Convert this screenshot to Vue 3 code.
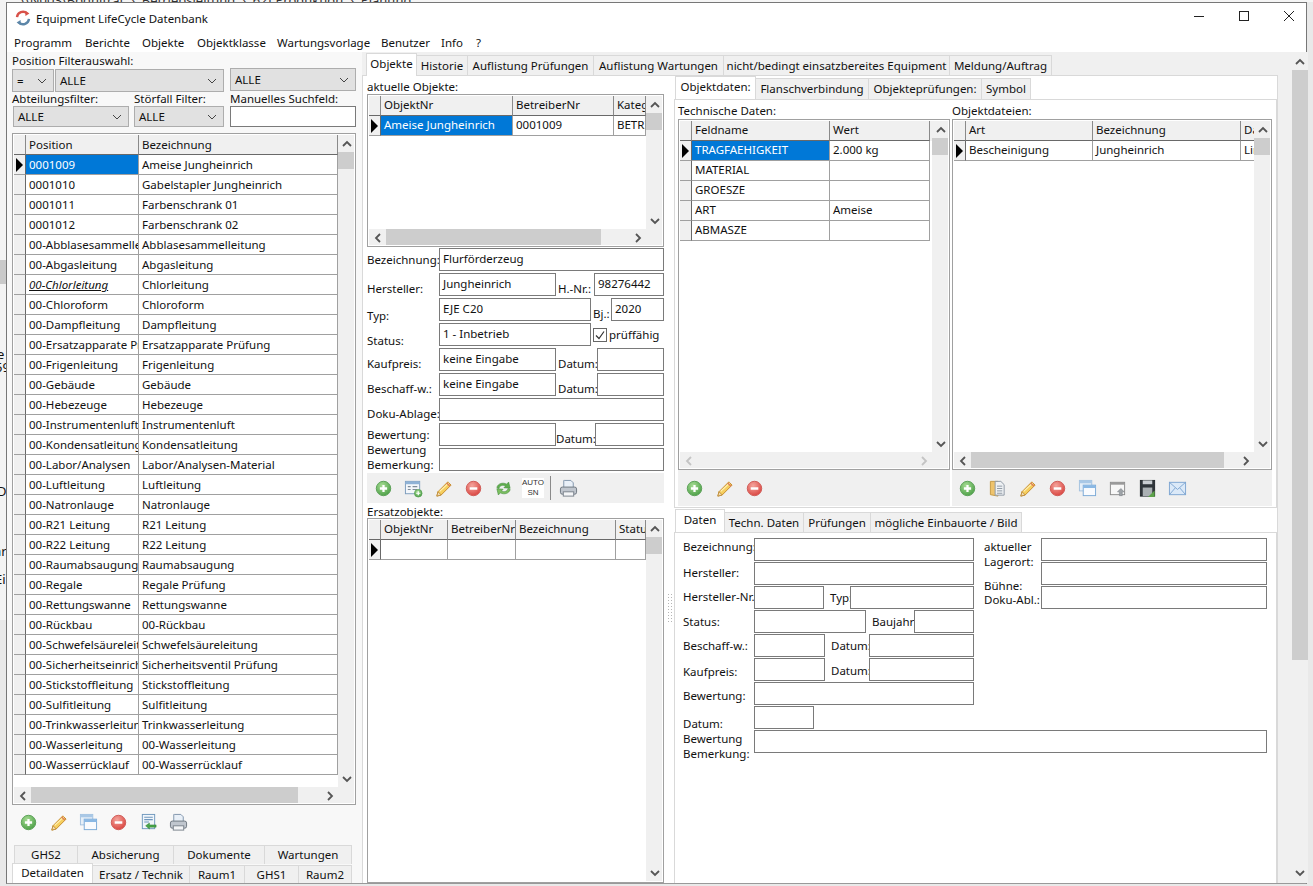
<script setup>
import { h } from 'vue'

const chev = (d, pale) =>
  h('svg', { class: 'chev' + (pale ? ' pale' : ''), viewBox: '0 0 10 10', width: 10, height: 10 }, [
    h('path', { d: { u: 'M1 7 L5 3 L9 7', d: 'M1 3 L5 7 L9 3', l: 'M7 1 L3 5 L7 9', r: 'M3 1 L7 5 L3 9' }[d] }),
  ])

const DataGrid = (p) =>
  h('div', { class: 'dg' }, [
    h('div', { class: 'dg-main' }, [
      h('div', { class: 'dg-row dg-head' }, [
        h('span', { class: 'dg-rh' }),
        ...p.cols.map((c) => h('span', { class: 'dg-c', style: { width: c.w + 'px' } }, c.t)),
      ]),
      ...p.rows.map((r, i) =>
        h('div', { class: 'dg-row' }, [
          h('span', { class: 'dg-rh' }, i === 0 ? [h('i', { class: 'tri' })] : []),
          ...p.cols.map((c, j) =>
            h(
              'span',
              {
                class: ['dg-c', i === 0 && j === 0 && p.sel ? 'sel' : '', r.em && j === 0 ? 'em' : ''],
                style: { width: c.w + 'px' },
              },
              r.c[j] || '',
            ),
          ),
        ]),
      ),
    ]),
    h('div', { class: 'dg-v' }, [
      h('span', { class: 'sb-btn' }, [chev('u')]),
      h('span', { class: 'v-thumb' }),
      h('span', { class: 'sb-gap' }),
      h('span', { class: 'sb-btn' }, [chev('d')]),
    ]),
    p.noH
      ? null
      : h('div', { class: 'dg-h' }, [
          h('span', { class: 'sb-btn' }, [chev('l', !p.hw)]),
          p.hw ? h('span', { class: 'h-thumb', style: { width: p.hw + 'px' } }) : null,
          h('span', { class: 'sb-gap' }),
          h('span', { class: 'sb-btn' }, [chev('r', !p.hw)]),
        ]),
    p.noH ? null : h('div', { class: 'dg-corner' }),
  ])
DataGrid.props = ['cols', 'rows', 'sel', 'hw', 'noH']

const menu = [
  ['Programm', 71], ['Berichte', 57], ['Objekte', 55], ['Objektklasse', 80],
  ['Wartungsvorlage', 104], ['Benutzer', 60], ['Info', 35], ['?', 20],
]

const pair = (a, b) => ({ c: [a, b ?? a] })
const posRows = [
  pair('0001009', 'Ameise Jungheinrich'), pair('0001010', 'Gabelstapler Jungheinrich'),
  pair('0001011', 'Farbenschrank 01'), pair('0001012', 'Farbenschrank 02'),
  pair('00-Abblasesammelleitung', 'Abblasesammelleitung'), pair('00-Abgasleitung', 'Abgasleitung'),
  { c: ['00-Chlorleitung', 'Chlorleitung'], em: true }, pair('00-Chloroform', 'Chloroform'),
  pair('00-Dampfleitung', 'Dampfleitung'), pair('00-Ersatzapparate Prüfung', 'Ersatzapparate Prüfung'),
  pair('00-Frigenleitung', 'Frigenleitung'), pair('00-Gebäude', 'Gebäude'),
  pair('00-Hebezeuge', 'Hebezeuge'), pair('00-Instrumentenluft', 'Instrumentenluft'),
  pair('00-Kondensatleitung', 'Kondensatleitung'), pair('00-Labor/Analysen', 'Labor/Analysen-Material'),
  pair('00-Luftleitung', 'Luftleitung'), pair('00-Natronlauge', 'Natronlauge'),
  pair('00-R21 Leitung', 'R21 Leitung'), pair('00-R22 Leitung', 'R22 Leitung'),
  pair('00-Raumabsaugung', 'Raumabsaugung'), pair('00-Regale', 'Regale  Prüfung'),
  pair('00-Rettungswanne', 'Rettungswanne'), pair('00-Rückbau'),
  pair('00-Schwefelsäureleitung', 'Schwefelsäureleitung'), pair('00-Sicherheitseinrichtung', 'Sicherheitsventil Prüfung'),
  pair('00-Stickstoffleitung', 'Stickstoffleitung'), pair('00-Sulfitleitung', 'Sulfitleitung'),
  pair('00-Trinkwasserleitung', 'Trinkwasserleitung'), pair('00-Wasserleitung'), pair('00-Wasserrücklauf'),
]
const posCols = [{ t: 'Position', w: 113 }, { t: 'Bezeichnung', w: 199 }]
const objCols = [{ t: 'ObjektNr', w: 132 }, { t: 'BetreiberNr', w: 101 }, { t: 'Kategorie', w: 32 }]
const objRows = [{ c: ['Ameise Jungheinrich', '0001009', 'BETRIEB'] }]
const ersCols = [{ t: 'ObjektNr', w: 67 }, { t: 'BetreiberNr', w: 68 }, { t: 'Bezeichnung', w: 100 }, { t: 'Status', w: 30 }]
const ersRows = [{ c: ['', '', '', ''] }]
const techCols = [{ t: 'Feldname', w: 138 }, { t: 'Wert', w: 100 }]
const techRows = [
  { c: ['TRAGFAEHIGKEIT', '2.000 kg'] }, { c: ['MATERIAL', ''] }, { c: ['GROESZE', ''] },
  { c: ['ART', 'Ameise'] }, { c: ['ABMASZE', ''] },
]
const fileCols = [{ t: 'Art', w: 127 }, { t: 'Bezeichnung', w: 148 }, { t: 'Datei', w: 14 }]
const fileRows = [{ c: ['Bescheinigung', 'Jungheinrich', 'Link'] }]

const mainTabs = [
  ['Objekte', 51], ['Historie', 51], ['Auflistung Prüfungen', 126], ['Auflistung Wartungen', 130],
  ['nicht/bedingt einsatzbereites Equipment', 226], ['Meldung/Auftrag', 102],
]
const subTabs = [['Objektdaten:', 81], ['Flanschverbindung', 113], ['Objekteprüfungen:', 113], ['Symbol', 49]]
const dataTabs = [['Daten', 50], ['Techn. Daten', 79], ['Prüfungen', 67], ['mögliche Einbauorte / Bild', 151]]
const leftTabs1 = [['GHS2', 64], ['Absicherung', 96], ['Dokumente', 91], ['Wartungen', 87]]
const leftTabs2 = [['Detaildaten', 81], ['Ersatz / Technik', 97], ['Raum1', 55], ['GHS1', 54], ['Raum2', 53]]

const leftTools = ['add', 'edit', 'win', 'del', 'imp', 'print']
const techTools = ['add', 'edit', 'del']
const fileTools = ['add', 'folder', 'edit', 'del', 'win', 'upl', 'save', 'mail']
</script>

<template>
  <div class="page">
    <svg class="defs" width="0" height="0" aria-hidden="true">
      <defs>
        <radialGradient id="gG" cx="40%" cy="30%" r="75%"><stop offset="0" stop-color="#a6dc93" /><stop offset="1" stop-color="#4a9e45" /></radialGradient>
        <radialGradient id="gR" cx="40%" cy="30%" r="75%"><stop offset="0" stop-color="#f4a49c" /><stop offset="1" stop-color="#d9423d" /></radialGradient>
      </defs>
      <symbol id="i-add" viewBox="0 0 20 20"><circle cx="10" cy="10" r="7.6" fill="url(#gG)" stroke="#5a9f55" /><path d="M10 6.2v7.6M6.2 10h7.6" stroke="#fff" stroke-width="2.4" /></symbol>
      <symbol id="i-del" viewBox="0 0 20 20"><circle cx="10" cy="10" r="7.6" fill="url(#gR)" stroke="#cf5a55" /><path d="M6 10h8" stroke="#fff" stroke-width="2.6" /></symbol>
      <symbol id="i-edit" viewBox="0 0 20 20"><path d="M3 18l1.2-4.6L14.6 3 18 6.4 7.6 16.8z" fill="#f6cf5f" stroke="#c58a2a" stroke-width="1" /><path d="M3 18l1.2-4.6 3.4 3.4z" fill="#f3dcb4" stroke="#b8862e" stroke-width=".8" /><path d="M6 13L15.6 4" stroke="#fff2b8" stroke-width="1.2" /><path d="M13.4 4.2l3.4 3.4" stroke="#dd7f5a" stroke-width="1.6" /></symbol>
      <symbol id="i-win" viewBox="0 0 20 20"><rect x="1.5" y="1.5" width="13" height="11" fill="#e6eff8" stroke="#a3c1df" /><rect x="1.5" y="1.5" width="13" height="3" fill="#a9c8e6" /><rect x="5.5" y="6.5" width="13" height="11" fill="#f9fbfe" stroke="#7aa9d6" /><rect x="5.5" y="6.5" width="13" height="3" fill="#8ab8e4" /></symbol>
      <symbol id="i-imp" viewBox="0 0 20 20"><rect x="3.5" y="1.5" width="13" height="15" fill="#f1f6fb" stroke="#6f97bd" /><path d="M5.5 4.5h9M5.5 7h9M5.5 9.5h5" stroke="#6f97bd" stroke-width="1.2" /><path d="M7 13.5l4-3v2h7v2.400h-7v2z" fill="#48a64a" stroke="#2f7d34" stroke-width=".5" /></symbol>
      <symbol id="i-print" viewBox="0 0 20 20"><path d="M6 1.5h6.5L15 4v6H5V1.5z" fill="#e9f0f8" stroke="#7e93ab" /><rect x="1.5" y="8.5" width="17" height="7.5" rx="2" fill="#c0c6ce" stroke="#6e7680" /><rect x="4.5" y="13.5" width="11" height="4.5" fill="#f4f5f7" stroke="#7a828b" /></symbol>
      <symbol id="i-form" viewBox="0 0 20 20"><rect x="1.5" y="2.5" width="15" height="13" fill="#f4f7fb" stroke="#7c9cbc" /><rect x="1.5" y="2.5" width="15" height="3" fill="#8fb2d6" /><path d="M4 8h3M9 8h5M4 11h3M9 11h5" stroke="#7f8c99" stroke-width="1.2" /><circle cx="15" cy="15" r="4" fill="url(#gG)" stroke="#4f9a4c" stroke-width=".7" /><path d="M15 12.8v4.4M12.8 15h4.4" stroke="#fff" stroke-width="1.3" /></symbol>
      <symbol id="i-sync" viewBox="0 0 20 20"><path d="M3 9C4 4.8 9 3.2 13.4 5.4L15.4 3.2l1.6 6.6-6.6-.6 1.8-1.8C9 5.8 6 7 5.2 10z" fill="#5fae4d" stroke="#3f8a38" stroke-width=".6" /><path d="M17 11c-1 4.2-6 5.8-10.4 3.6L4.6 16.8 3 10.2l6.6.6-1.8 1.8C11 14.2 14 13 14.8 10z" fill="#7cbf5f" stroke="#3f8a38" stroke-width=".6" /></symbol>
      <symbol id="i-folder" viewBox="0 0 20 20"><path d="M2.5 2.5h8v15.500l-8-1.500z" fill="#eec36c" stroke="#c59a45" /><path d="M7.5 2.5h6l3.500 3.500v11h-9.500z" fill="#eef1f4" stroke="#8d98a3" /><path d="M9.5 7.5h5.500M9.5 10h5.500M9.5 12.500h5.500M9.500 15h5.500" stroke="#8d98a3" /></symbol>
      <symbol id="i-upl" viewBox="0 0 20 20"><rect x="2.5" y="3.5" width="15" height="13" fill="#f7f7f7" stroke="#8a8a8a" /><rect x="2.5" y="3.5" width="15" height="2.5" fill="#9a9a9a" /><path d="M13.5 10l3.500 3.500h-2v4h-3v-4h-2z" fill="#9ea3a8" stroke="#7c8186" stroke-width=".6" /></symbol>
      <symbol id="i-save" viewBox="0 0 20 20"><rect x="2.5" y="1.5" width="15" height="16.500" fill="#2f353a" stroke="#22272b" /><rect x="5" y="1.5" width="10" height="4" fill="#c9ced2" /><rect x="5" y="9" width="10" height="9" fill="#aab0b3" /><path d="M10.5 19l7-7v7z" fill="#5da34a" /></symbol>
      <symbol id="i-mail" viewBox="0 0 20 20"><rect x="1.5" y="3.5" width="17" height="13" fill="#dbe9f8" stroke="#7ea6d2" /><path d="M1.5 3.5L10 11l8.500-7.500M1.500 16.500L7.500 9.500M18.500 16.500L12.500 9.500" fill="none" stroke="#7ea6d2" /></symbol>
    </svg>

    <div class="crumb">\\N003\Bodnitrat &nbsp;›&nbsp; Betriebsleitung &nbsp;›&nbsp; 62I Produktion &nbsp;›&nbsp; Planung</div>
    <div class="behind">
      <span class="bh-block"></span>
      <span class="bh-t t1">e</span><span class="bh-t t2">59</span><span class="bh-t t3">Di</span><span class="bh-t t4">ar</span><span class="bh-t t5">Ei</span>
    </div>

    <div class="window">
      <header class="title">
        <svg class="logo" viewBox="0 0 20 20" width="16" height="16">
          <path d="M2.5 9A7.5 7.5 0 0 1 15 4.2" fill="none" stroke="#d8524a" stroke-width="3" />
          <path d="M13 1l5 3.500-5 3z" fill="#d8524a" />
          <path d="M17.5 11A7.5 7.5 0 0 1 5 15.8" fill="none" stroke="#5c86a8" stroke-width="3" />
          <path d="M7 19l-5-3.500 5-3z" fill="#5c86a8" />
        </svg>
        <span class="title-text">Equipment LifeCycle Datenbank</span>
        <div class="ctl">
          <svg viewBox="0 0 12 12" width="12" height="12"><path d="M1 6.5h10" /></svg>
          <svg viewBox="0 0 12 12" width="12" height="12"><rect x="1.5" y="1.5" width="9" height="9" /></svg>
          <svg viewBox="0 0 12 12" width="12" height="12"><path d="M1 1l10 10M11 1L1 11" /></svg>
        </div>
      </header>

      <nav class="menu">
        <span v-for="m in menu" :key="m[0]" class="menu-i" :style="{ width: m[1] + 'px' }">{{ m[0] }}</span>
      </nav>

      <div class="body">
        <aside class="left">
          <div class="l-lab1">Position Filterauswahl:</div>
          <div class="l-row1">
            <div class="combo w42">=<svg class="cc" viewBox="0 0 10 10" width="10" height="10"><path d="M1 3l4 4 4-4" /></svg></div>
            <div class="combo w169">ALLE<svg class="cc" viewBox="0 0 10 10" width="10" height="10"><path d="M1 3l4 4 4-4" /></svg></div>
            <div class="combo w126 up1">ALLE<svg class="cc" viewBox="0 0 10 10" width="10" height="10"><path d="M1 3l4 4 4-4" /></svg></div>
          </div>
          <div class="l-lab2"><span class="w122">Abteilungsfilter:</span><span class="w96">Störfall Filter:</span><span>Manuelles Suchfeld:</span></div>
          <div class="l-row2">
            <div class="combo w116 short">ALLE<svg class="cc" viewBox="0 0 10 10" width="10" height="10"><path d="M1 3l4 4 4-4" /></svg></div>
            <div class="combo w90 short">ALLE<svg class="cc" viewBox="0 0 10 10" width="10" height="10"><path d="M1 3l4 4 4-4" /></svg></div>
            <div class="tx search"></div>
          </div>
          <DataGrid class="g-pos" :cols="posCols" :rows="posRows" :sel="true" :hw="267" />
          <div class="tb tb-left">
            <span v-for="(t, i) in leftTools" :key="i" class="slot"><svg width="19" height="19"><use :href="'#i-' + t" /></svg></span>
          </div>
          <div class="l-tabs">
            <div class="l-tr top"><span v-for="t in leftTabs1" :key="t[0]" class="tab flat" :style="{ width: t[1] + 'px' }">{{ t[0] }}</span></div>
            <div class="l-tr bot"><span v-for="(t, i) in leftTabs2" :key="t[0]" class="tab flat" :class="{ on: i === 0 }" :style="{ width: t[1] + 'px' }">{{ t[0] }}</span></div>
          </div>
        </aside>

        <section class="host">
          <div class="strip main-strip">
            <span v-for="(t, i) in mainTabs" :key="t[0]" class="tab" :class="{ on: i === 0 }" :style="{ width: t[1] + 'px' }">{{ t[0] }}</span>
          </div>
          <div class="host-panel">
            <div class="center">
              <div class="c-lab">aktuelle Objekte:</div>
              <DataGrid class="g-obj" :cols="objCols" :rows="objRows" :sel="true" :hw="215" />
              <div class="form">
                <div class="fr"><span class="lb">Bezeichnung:</span><div class="tx grow">Flurförderzeug</div></div>
                <div class="fr"><span class="lb d4">Hersteller:</span><div class="tx w117">Jungheinrich</div><span class="lb2 w38 d4">H.-Nr.:</span><div class="tx grow">98276442</div></div>
                <div class="fr"><span class="lb d6">Typ:</span><div class="tx w152">EJE C20</div><span class="lb2 w20 d4">Bj.:</span><div class="tx grow">2020</div></div>
                <div class="fr"><span class="lb d6">Status:</span><div class="tx w152">1 - Inbetrieb</div>
                  <label class="chk"><svg viewBox="0 0 14 14" width="14" height="14"><rect x=".5" y=".5" width="13" height="13" fill="#fff" stroke="#666" /><path d="M3 7.5l3 3 5-7" fill="none" stroke="#333" stroke-width="1.2" /></svg><span>prüffähig</span></label></div>
                <div class="fr"><span class="lb d4">Kaufpreis:</span><div class="tx w117">keine Eingabe</div><span class="lb2 w41 d4">Datum:</span><div class="tx grow"></div></div>
                <div class="fr"><span class="lb d4">Beschaff-w.:</span><div class="tx w117">keine Eingabe</div><span class="lb2 w41 d4">Datum:</span><div class="tx grow"></div></div>
                <div class="fr"><span class="lb d4">Doku-Ablage:</span><div class="tx grow"></div></div>
                <div class="fr"><span class="lb">Bewertung:</span><div class="tx w117"></div><span class="lb3 w39 d4">Datum:</span><div class="tx grow"></div></div>
                <div class="fr"><span class="lb two">Bewertung<br />Bemerkung:</span><div class="tx grow"></div></div>
              </div>
              <div class="tb tb-center">
                <span class="slot"><svg width="19" height="19"><use href="#i-add" /></svg></span>
                <span class="slot"><svg width="19" height="19"><use href="#i-form" /></svg></span>
                <span class="slot"><svg width="19" height="19"><use href="#i-edit" /></svg></span>
                <span class="slot"><svg width="19" height="19"><use href="#i-del" /></svg></span>
                <span class="slot"><svg width="19" height="19"><use href="#i-sync" /></svg></span>
                <span class="slot auto">AUTO<br />SN</span>
                <span class="sep"></span>
                <span class="slot"><svg width="19" height="19"><use href="#i-print" /></svg></span>
              </div>
              <div class="c-lab2">Ersatzobjekte:</div>
              <DataGrid class="g-ers" :cols="ersCols" :rows="ersRows" :sel="false" :noH="true" />
            </div>

            <div class="splitter"></div>

            <div class="right">
              <div class="strip sub-strip">
                <span v-for="(t, i) in subTabs" :key="t[0]" class="tab" :class="{ on: i === 0 }" :style="{ width: t[1] + 'px' }">{{ t[0] }}</span>
              </div>
              <div class="sub-panel">
                <div class="sub-col col-a">
                  <div class="s-lab">Technische Daten:</div>
                  <DataGrid class="g-tech" :cols="techCols" :rows="techRows" :sel="true" :hw="0" />
                  <div class="tb tb-sub">
                    <span v-for="t in techTools" :key="t" class="slot"><svg width="19" height="19"><use :href="'#i-' + t" /></svg></span>
                  </div>
                </div>
                <div class="sub-col col-b">
                  <div class="s-lab">Objektdateien:</div>
                  <DataGrid class="g-file" :cols="fileCols" :rows="fileRows" :sel="false" :hw="253" />
                  <div class="tb tb-sub b">
                    <span v-for="(t, i) in fileTools" :key="i" class="slot"><svg width="19" height="19"><use :href="'#i-' + t" /></svg></span>
                  </div>
                </div>
              </div>
              <div class="strip data-strip">
                <span v-for="(t, i) in dataTabs" :key="t[0]" class="tab" :class="{ on: i === 0 }" :style="{ width: t[1] + 'px' }">{{ t[0] }}</span>
              </div>
              <div class="data-panel">
                <div class="dp-top">
                  <div class="dp-left">
                    <div class="dr"><span class="dl u3">Bezeichnung:</span><div class="tx w220"></div></div>
                    <div class="dr"><span class="dl u1">Hersteller:</span><div class="tx w220"></div></div>
                    <div class="dr"><span class="dl u1">Hersteller-Nr.</span><div class="tx w70"></div><span class="dm w26">Typ:</span><div class="tx w124"></div></div>
                    <div class="dr"><span class="dl">Status:</span><div class="tx w112"></div><span class="dm w48">Baujahr:</span><div class="tx w60"></div></div>
                    <div class="dr"><span class="dl">Beschaff-w.:</span><div class="tx w71"></div><span class="dm w44">Datum:</span><div class="tx w105"></div></div>
                    <div class="dr"><span class="dl d2">Kaufpreis:</span><div class="tx w71"></div><span class="dm w44 d2">Datum:</span><div class="tx w105"></div></div>
                    <div class="dr"><span class="dl d2">Bewertung:</span><div class="tx w220"></div></div>
                    <div class="dr"><span class="dl d5">Datum:</span><div class="tx w60"></div></div>
                  </div>
                  <div class="dp-right">
                    <div class="rl"><span>aktueller</span><span>Lagerort:</span><span class="bu">Bühne:</span><span>Doku-Abl.:</span></div>
                    <div class="ri"><div class="tx"></div><div class="tx"></div><div class="tx"></div></div>
                  </div>
                </div>
                <div class="dr wide"><span class="dl two">Bewertung<br />Bemerkung:</span><div class="tx w513"></div></div>
              </div>
            </div>
          </div>
        </section>

        <div class="win-bar">
          <svg class="wb-c first" viewBox="0 0 10 10" width="10" height="10"><path d="M1 7L5 3l4 4" /></svg>
          <span class="wb-thumb"></span>
          <span class="wb-gap"></span>
          <svg class="wb-c" viewBox="0 0 10 10" width="10" height="10"><path d="M1 3l4 4 4-4" /></svg>
        </div>
      </div>
    </div>
  </div>
</template>

<style>
.dg {
  box-sizing: border-box;
  display: grid;
  grid-template-columns: 1fr 16px;
  grid-template-rows: 1fr auto;
  border: 1px solid #a0a0a0;
  padding: 1px;
  background: #fff;
  overflow: hidden;
  min-height: 0;
}
.dg-main { overflow: hidden; min-width: 0; min-height: 0; }
.dg-row { display: flex; height: 20px; white-space: nowrap; }
.dg-head { background: #f0f0f0; }
.dg-head .dg-c, .dg-head .dg-rh { border-bottom: 1px solid #696969; border-right-color: #8a8a8a; background: #f0f0f0; }
.dg-rh {
  box-sizing: border-box; flex: none; width: 12px; height: 20px;
  background: #f0f0f0; border-right: 1px solid #696969; border-bottom: 1px solid #a0a0a0;
  display: flex; align-items: center; justify-content: flex-start; padding-left: 2px;
}
.dg-c {
  box-sizing: border-box; flex: none; height: 20px; line-height: 18px; padding-left: 3px;
  overflow: hidden; border-right: 1px solid #a0a0a0; border-bottom: 1px solid #a0a0a0; color: #111;
}
.g-pos .dg-c { line-height: 19px; }
.dg-c.sel { background: #0078d7; color: #fff; }
.dg-c.em { font-style: italic; text-decoration: underline; }
.tri { width: 0; height: 0; border-left: 7px solid #000; border-top: 7px solid transparent; border-bottom: 7px solid transparent; }
.dg-v { display: flex; flex-direction: column; background: #f0f0f0; height: 100%; min-height: 0; }
.dg-h { display: flex; height: 16px; background: #f0f0f0; }
.dg-corner { background: #f0f0f0; height: 16px; }
.sb-btn { flex: none; width: 17px; height: 17px; display: flex; align-items: center; justify-content: center; }
.sb-gap { flex: 1; }
.v-thumb { flex: none; height: 17px; background: #cdcdcd; }
.h-thumb { flex: none; background: #cdcdcd; }
.chev path { fill: none; stroke: #555; stroke-width: 1.8; }
.chev.pale path { stroke: #c4c4c4; }
</style>

<style scoped>
.page {
  position: relative; width: 1313px; height: 886px; overflow: hidden; background: #e9e9e9;
  font-family: "Noto Sans", "Open Sans", sans-serif; font-size: 11.5px; color: #111;
}
.defs { position: absolute; }
.crumb { height: 2px; overflow: hidden; padding-left: 20px; line-height: 0; font-size: 13px; color: #333; white-space: nowrap; background: #f5f5f5; }
.behind { position: absolute; left: 0; top: 0; width: 6px; height: 620px; background: #f3f3f3; overflow: hidden; }
.bh-block { position: absolute; left: 0; top: 260px; width: 6px; height: 24px; background: #c9c9c9; }
.bh-t { position: absolute; left: -3px; font-size: 13px; white-space: nowrap; }
.t1 { top: 345px; } .t2 { top: 358px; left: -5px; } .t3 { top: 482px; } .t4 { top: 542px; left: -6px; } .t5 { top: 570px; left: -5px; }

.window {
  position: relative; box-sizing: border-box; width: 1301px; height: 882px; margin-left: 6px; margin-top: 0;
  background: #fff; border: 1px solid #777; border-bottom-color: #999; display: flex; flex-direction: column;
}
.title { flex: none; height: 30px; display: flex; align-items: center; padding-left: 8px; background: #fff; }
.logo { flex: none; margin-right: 5px; }
.title-text { font-size: 11.5px; }
.ctl { margin-left: auto; display: flex; margin-right: 11px; margin-top: -4px; }
.ctl svg { margin-left: 33px; fill: none; stroke: #222; stroke-width: 1; }
.menu { flex: none; height: 19px; display: flex; align-items: center; padding-left: 7px; }
.menu-i { flex: none; white-space: nowrap; }
.body { flex: 1; min-height: 0; display: flex; background: #f0f0f0; }

.left { flex: none; box-sizing: border-box; width: 355px; padding-left: 5px; display: flex; flex-direction: column; background: #f8f8f8; }
.l-lab1 { height: 17px; line-height: 18px; }
.l-row1 { height: 23px; display: flex; }
.combo {
  box-sizing: border-box; height: 23px; flex: none; display: flex; align-items: center; justify-content: space-between;
  padding: 0 6px 0 4px; background: #e1e1e1; border: 1px solid #adadad;
}
.cc { fill: none; stroke: #444; stroke-width: 1; }
.w42 { width: 42px; margin-right: 1px; }
.w169 { width: 169px; margin-right: 6px; }
.w126 { width: 126px; }
.up1 { margin-top: -1px; }
.l-lab2 { height: 15px; line-height: 14px; display: flex; white-space: nowrap; }
.w122 { width: 122px; flex: none; }
.w96 { width: 96px; flex: none; }
.l-row2 { height: 22px; display: flex; align-items: flex-start; padding-left: 1px; }
.short { height: 21px; }
.w116 { width: 116px; margin-right: 5px; }
.w90 { width: 90px; margin-right: 6px; }
.tx { box-sizing: border-box; height: 23px; flex: none; background: #fff; border: 1px solid #7a7a7a; padding: 1px 3px 0; line-height: 17px; white-space: nowrap; overflow: hidden; }
.search { width: 126px; height: 21px; }
.g-pos { flex: none; width: 344px; height: 672px; margin-top: 6px; }
.tb { display: flex; align-items: center; }
.slot { flex: none; width: 30px; display: flex; justify-content: center; align-items: center; }
.tb-left { flex: none; height: 40px; padding: 0 0 5px 1px; box-sizing: border-box; }
.l-tabs { flex: 1; position: relative; }
.l-tr { display: flex; }
.l-tr.top { height: 19px; padding-left: 2px; padding-top: 0; }
.l-tr.bot { height: 19px; position: relative; }
.tab {
  box-sizing: border-box; flex: none; display: flex; align-items: center; justify-content: center; white-space: nowrap;
  background: #f0f0f0; border: 1px solid #d9d9d9; border-bottom: none; height: 21px; margin-top: 2px; padding-bottom: 1px;
}
.tab + .tab { border-left: none; }
.tab.on { background: #fff; height: 23px; margin-top: 0; position: relative; z-index: 1; padding-bottom: 3px; }
.tab.flat { height: 19px; margin-top: 0; }
.l-tr.bot .tab { margin-top: 1px; height: 18px; }
.l-tr.bot .tab.on { margin-top: -1px; height: 20px; padding-bottom: 2px; }

.host { flex: none; width: 928px; display: flex; flex-direction: column; }
.strip { display: flex; flex: none; align-items: flex-start; }
.main-strip { height: 23px; padding-left: 4px; padding-top: 1px; box-sizing: border-box; margin-bottom: 0; }
.host-panel { flex: none; width: 916px; height: 808px; box-sizing: border-box; display: flex; background: #fff; border: 1px solid #d9d9d9; border-bottom: none; }
.center { flex: none; width: 304px; box-sizing: border-box; padding-left: 4px; display: flex; flex-direction: column; }
.c-lab { height: 18px; line-height: 22px; flex: none; }
.g-obj { flex: none; width: 297px; height: 153px; }
.form { flex: none; width: 297px; margin-top: 1px; display: flex; flex-direction: column; gap: 2px; }
.fr { display: flex; height: 23px; }
.lb { flex: none; width: 72px; line-height: 23px; white-space: nowrap; }
.lb.two { line-height: 15px; margin-top: -6px; }
.lb2, .lb3 { flex: none; box-sizing: border-box; padding-left: 2px; line-height: 23px; white-space: nowrap; }
.lb3 { padding-left: 0; }
.d4 { padding-top: 4px; height: 19px; }
.d6 { padding-top: 6px; height: 17px; }
.grow { flex: 1; min-width: 0; }
.w117 { width: 117px; }
.w152 { width: 152px; }
.w38 { width: 38px; }
.w20 { width: 20px; }
.w41 { width: 41px; }
.w39 { width: 39px; }
.chk { display: flex; align-items: center; gap: 2px; padding-left: 2px; white-space: nowrap; }
.tb-center { flex: none; height: 30px; width: 297px; margin-top: 2px; background: #f0f0f0; padding-left: 1px; box-sizing: border-box; }
.auto { font-size: 8px; line-height: 10px; text-align: center; color: #333; background: #fff; width: 22px; margin: 0 4px; display: block; font-family: "Liberation Sans", sans-serif; }
.sep { width: 1px; height: 24px; background: #8a8a8a; margin: 0 2px; flex: none; }
.c-lab2 { flex: none; height: 15px; line-height: 17px; }
.g-ers { flex: 1; width: 297px; min-height: 0; }

.splitter {
  flex: none; width: 6px; height: 30px; align-self: flex-start; margin-top: 517px;
  background-image: radial-gradient(circle, #b5b5b5 0.7px, transparent 1px); background-size: 3px 3px;
}
.right { flex: 1; min-width: 0; display: flex; flex-direction: column; }
.sub-strip { height: 23px; padding-left: 2px; padding-top: 0; box-sizing: border-box; margin-top: 0; }
.sub-panel { flex: none; width: 603px; height: 409px; box-sizing: border-box; margin-left: 1px; border: 1px solid #d9d9d9; display: flex; padding-left: 3px; background: #fff; }
.sub-col { display: flex; flex-direction: column; flex: none; }
.col-a { width: 272px; margin-right: 2px; }
.col-b { width: 320px; }
.s-lab { flex: none; height: 19px; line-height: 22px; }
.g-tech, .g-file { flex: none; height: 351px; }
.tb-sub { flex: none; height: 36px; background: #f0f0f0; padding-left: 1px; box-sizing: border-box; }
.tb-sub.b { padding-left: 0; }
.data-strip { height: 24px; padding-left: 2px; padding-top: 1px; box-sizing: border-box; }
.data-strip .tab { height: 20px; margin-top: 3px; }
.data-strip .tab.on { height: 23px; margin-top: 0; }
.data-panel { flex: 1; min-height: 0; width: 603px; box-sizing: border-box; margin-left: 1px; border: 1px solid #d9d9d9; border-bottom: none; background: #fff; padding: 5px 0 0 4px; display: flex; flex-direction: column; }
.dp-top { display: flex; flex: none; }
.dp-left { flex: none; display: flex; flex-direction: column; gap: 1px; width: 305px; }
.dr { display: flex; height: 23px; }
.dl { flex: none; width: 75px; padding-left: 4px; box-sizing: border-box; line-height: 23px; white-space: nowrap; }
.dl.two { line-height: 15px; margin-top: 1px; }
.dl.d5 { padding-top: 6px; height: 17px; }
.dl.u3 { line-height: 17px; }
.dl.u1 { line-height: 21px; }
.d2 { padding-top: 2px; height: 21px; }
.dm { flex: none; box-sizing: border-box; line-height: 23px; padding-left: 6px; white-space: nowrap; }
.dm.d2 { line-height: 21px; }
.wide { margin-top: 1px; }
.w220 { width: 220px; }
.w70 { width: 70px; }
.w26 { width: 26px; }
.w124 { width: 124px; }
.w112 { width: 112px; }
.w48 { width: 48px; }
.w60 { width: 60px; }
.w71 { width: 71px; }
.w44 { width: 44px; }
.w105 { width: 105px; }
.w513 { width: 513px; }
.dp-right { display: flex; flex: 1; }
.rl { flex: none; width: 57px; display: flex; flex-direction: column; line-height: 15px; white-space: nowrap; padding-top: 1px; }
.rl .bu { margin-top: 9px; }
.rl span:last-child { line-height: 13px; }
.ri { flex: none; width: 226px; display: flex; flex-direction: column; gap: 1px; }
.ri .tx { height: 23px; }

.win-bar { flex: none; width: 16px; margin-left: 2px; display: flex; flex-direction: column; align-items: center; background: #f0f0f0; }
.wb-c { flex: none; margin: 5px 0; fill: none; stroke: #555; stroke-width: 1.8; }
.wb-c.first { margin-bottom: 3px; }
.wb-thumb { flex: none; width: 16px; height: 590px; background: #cdcdcd; }
.wb-gap { flex: 1; }
</style>
